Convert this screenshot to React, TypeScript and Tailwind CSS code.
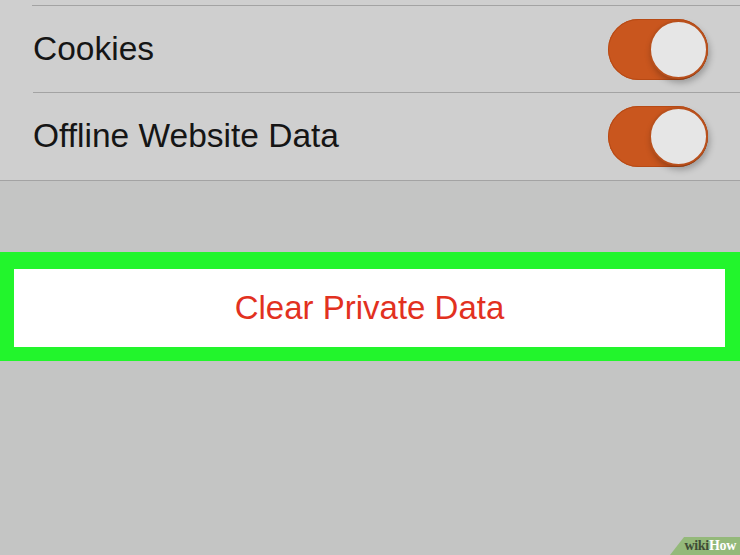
import type { ReactNode } from 'react';

function Toggle() {
  return (
    <div className="relative w-[100px] h-[61px] rounded-full bg-[#c9561e] shadow-[inset_0_0_0_1px_#b74a15]">
      <div className="absolute right-0 top-[1px] w-[59px] h-[59px] rounded-full bg-[#e6e6e6] border-[2px] border-[#b9501c] shadow-[2px_4px_6px_rgba(0,0,0,0.25)]" />
    </div>
  );
}

function Row({ children, last }: { children: ReactNode; last?: boolean }) {
  return (
    <div
      className={
        'flex items-center justify-between pr-[32px] ' +
        (last ? 'h-[87px]' : 'h-[87px] border-b border-[#a3a3a3]')
      }
    >
      <span className="text-[33.5px] text-[#151515]">{children}</span>
      <Toggle />
    </div>
  );
}

export default function App() {
  return (
    <div
      className="relative w-[740px] h-[555px] overflow-hidden bg-[#c4c5c4]"
      style={{ fontFamily: '"Liberation Sans", Arial, sans-serif' }}
    >
      {/* список переключателей */}
      <div className="bg-[#cfcfcf] border-b border-[#a3a3a3] pl-[33px]">
        <div className="h-[6px] border-b border-[#a3a3a3] -ml-[1px]" />
        <Row>Cookies</Row>
        <Row last>Offline Website Data</Row>
      </div>

      <div className="h-[71px]" />

      {/* кнопка в зелёной рамке */}
      <div className="bg-[#22f52c] pt-[17px] pb-[14px] pl-[14px] pr-[15px]">
        <button className="w-full h-[78px] bg-white flex items-center justify-center text-[33px] text-[#e2311f]">
          Clear Private Data
        </button>
      </div>

      {/* wikiHow */}
      <div className="absolute right-0 bottom-0 h-[18px] w-[70px] bg-[#94b97a] [clip-path:polygon(14px_0,100%_0,100%_100%,0_100%)] flex items-center justify-end pr-[4px]">
        <span
          className="text-[14px] font-bold leading-none tracking-[-0.3px]"
          style={{ fontFamily: '"Liberation Serif", "Times New Roman", serif' }}
        >
          <span className="text-[#3f4d36]">wiki</span>
          <span className="text-white">How</span>
        </span>
      </div>
    </div>
  );
}
